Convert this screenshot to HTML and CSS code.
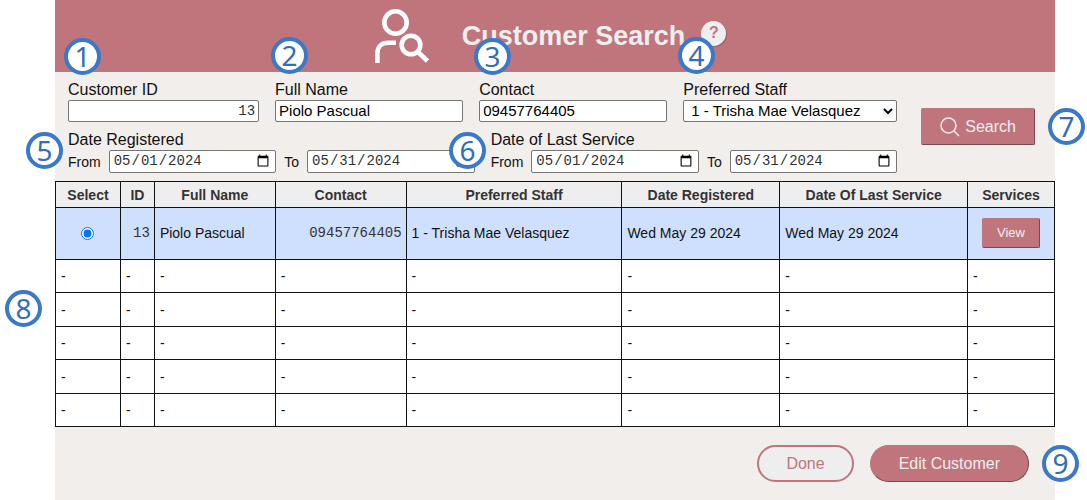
FILE: index.html
```html
<!DOCTYPE html>
<html lang="en">
<head>
<meta charset="utf-8">
<title>Customer Search</title>
<link rel="stylesheet" href="styles.css">
</head>
<body>
<main class="page">
  <header class="banner">
    <svg class="banner-icon" viewBox="0 0 54 54" fill="none" stroke="#fff" stroke-width="4.6" aria-hidden="true">
      <circle cx="20.5" cy="13.5" r="11.2"/>
      <path d="M2.4 54V44.500C2.400 37.500 6.500 33.800 13 33.800H21"/>
      <circle cx="36" cy="36" r="9.300"/>
      <path d="M42.500 42.500L52.500 52"/>
    </svg>
    <h1 class="title">Customer Search</h1>
    <button class="help" type="button" aria-label="Help">?</button>
  </header>

  <form class="search">
    <div class="fields">
      <div class="row">
        <div class="field first"><label for="cid">Customer ID</label><input id="cid" class="control mono number" type="text" value="13"></div>
        <div class="field"><label for="name">Full Name</label><input id="name" class="control" type="text" value="Piolo Pascual"></div>
        <div class="field"><label for="contact">Contact</label><input id="contact" class="control" type="text" value="09457764405"></div>
        <div class="field staff"><label for="staff">Preferred Staff</label><select id="staff" class="control"><option>1 - Trisha Mae Velasquez</option></select></div>
      </div>
      <div class="row">
        <fieldset class="range">
          <legend>Date Registered</legend>
          <div class="dates">
            <label for="rf">From</label><input id="rf" class="control mono date" type="date" value="2024-05-01">
            <label for="rt">To</label><input id="rt" class="control mono date" type="date" value="2024-05-31">
          </div>
        </fieldset>
        <fieldset class="range">
          <legend>Date of Last Service</legend>
          <div class="dates">
            <label for="sf">From</label><input id="sf" class="control mono date" type="date" value="2024-05-01">
            <label for="st">To</label><input id="st" class="control mono date" type="date" value="2024-05-31">
          </div>
        </fieldset>
      </div>
    </div>
    <button class="btn btn-search" type="button">
      <svg class="search-icon" viewBox="0 0 20 20" fill="none" stroke="currentColor" stroke-width="1.500" aria-hidden="true"><circle cx="8.500" cy="8.500" r="7.500"/><path d="M14 14l5 5"/></svg>
      Search
    </button>
  </form>

  <table class="results">
    <colgroup><col class="c-select"><col class="c-id"><col class="c-name"><col class="c-contact"><col class="c-staff"><col class="c-reg"><col class="c-last"><col class="c-services"></colgroup>
    <thead>
      <tr><th>Select</th><th>ID</th><th>Full Name</th><th>Contact</th><th>Preferred Staff</th><th>Date Registered</th><th>Date Of Last Service</th><th>Services</th></tr>
    </thead>
    <tbody>
      <tr class="selected"><td class="center"><input type="radio" name="pick" aria-label="Select Piolo Pascual" checked></td><td class="mono number">13</td><td>Piolo Pascual</td><td class="mono number">09457764405</td><td>1 - Trisha Mae Velasquez</td><td>Wed May 29 2024</td><td>Wed May 29 2024</td><td class="center"><button class="btn btn-view" type="button">View</button></td></tr>
      <tr><td>-</td><td>-</td><td>-</td><td>-</td><td>-</td><td>-</td><td>-</td><td>-</td></tr>
      <tr><td>-</td><td>-</td><td>-</td><td>-</td><td>-</td><td>-</td><td>-</td><td>-</td></tr>
      <tr><td>-</td><td>-</td><td>-</td><td>-</td><td>-</td><td>-</td><td>-</td><td>-</td></tr>
      <tr><td>-</td><td>-</td><td>-</td><td>-</td><td>-</td><td>-</td><td>-</td><td>-</td></tr>
      <tr><td>-</td><td>-</td><td>-</td><td>-</td><td>-</td><td>-</td><td>-</td><td>-</td></tr>
    </tbody>
  </table>

  <footer class="actions">
    <button class="btn pill outline" type="button">Done</button>
    <button class="btn pill" type="button">Edit Customer</button>
  </footer>
</main>
<span class="callout n1">1</span>
<span class="callout n2">2</span>
<span class="callout n3">3</span>
<span class="callout n4">4</span>
<span class="callout n5">5</span>
<span class="callout n6">6</span>
<span class="callout n7">7</span>
<span class="callout n8">8</span>
<span class="callout n9">9</span>
</body>
</html>
```
FILE: styles.css
```css
* { box-sizing: border-box; }
body {
  margin: 0;
  padding: 0 32px 0 55px;
  position: relative;
  background: #fff;
  color: #111;
  font: 16px/20px "Liberation Sans", Arial, sans-serif;
}
.page { min-height: 100vh; background: #f2eeeb; }

.banner {
  display: flex;
  align-items: center;
  justify-content: center;
  height: 72px;
  padding-right: 9px;
  background: #c0757d;
}
.banner-icon { width: 54px; height: 54px; margin-right: 33px; }
.title { margin: 0 16px 0 0; font-size: 27px; line-height: 32px; color: #eee; }
.help {
  width: 25px;
  height: 25px;
  margin-bottom: 6px;
  padding: 0;
  border: 0;
  border-radius: 50%;
  background: #eee;
  box-shadow: 1px 1px 1px #8a6468;
  color: #c0757d;
  font: bold 16px/24px "Liberation Sans", Arial, sans-serif;
}

.search {
  display: flex;
  align-items: center;
  gap: 24px;
  padding: 8px 20px 8px 13px;
}
.fields { flex: 1; display: grid; gap: 8px; }
.row { display: flex; gap: 16px; }
.field { flex: 188 1 0; min-width: 0; display: grid; }
.first { flex-grow: 191; }
.staff { flex-grow: 214; }
.control {
  width: 100%;
  min-width: 0;
  height: 22px;
  margin: 0;
  padding: 0 3px 1px;
  border: 1px solid #767676;
  border-radius: 2px;
  background: #fff;
  color: #000;
  font: 15px "Liberation Sans", Arial, sans-serif;
}
.mono { font-family: "Liberation Mono", "Courier New", monospace; font-size: 14px; color: #333; }
.number { text-align: right; }
.range { flex: 1; min-width: 0; margin: 0; padding: 0; border: 0; }
.range legend { padding: 0; }
.dates { display: flex; align-items: center; gap: 8px; font-size: 14px; }
.date { flex: 1; height: 23px; }

.btn {
  border: 1px solid #c0757d;
  border-right-color: #7a474d;
  border-bottom-color: #7a474d;
  border-radius: 2px;
  background: #c0757d;
  color: #eee;
  font: 16px "Liberation Sans", Arial, sans-serif;
}
.btn-search { display: flex; align-items: center; gap: 5px; height: 37px; padding: 0 18px; }
.search-icon { width: 20px; height: 20px; }
.btn-view { height: 30px; padding: 0 14px; font-size: 13px; }

.results {
  width: 100%;
  table-layout: fixed;
  border-collapse: collapse;
  background: #fff;
  font-size: 14px;
  line-height: 16px;
}
.results th, .results td { border: 1px solid #111; padding: 0 4px; }
.results th { height: 26px; background: #eee; color: #333; }
.results td { height: 33px; padding-left: 5px; text-align: left; }
.results tr:nth-child(odd) td { height: 34px; }
.results .selected td { padding-bottom: 2px; background: #cfe0ff; }
.results tr:nth-child(1) td { height: 52px; }
.results .center { padding-left: 4px; text-align: center; }
.results td.number { text-align: right; }
.results input { margin: 0; vertical-align: middle; }
.c-select { width: 6.5%; }
.c-id { width: 3.4%; }
.c-name { width: 12.1%; }
.c-contact { width: 13.1%; }
.c-staff { width: 21.6%; }
.c-reg { width: 15.8%; }
.c-last { width: 18.8%; }
.c-services { width: 8.7%; }

.actions { display: flex; justify-content: flex-end; gap: 16px; padding: 18px 26px; }
.pill { height: 37px; padding: 0 28px; border-radius: 19px; }
.outline { padding: 0 27px; border: 2px solid #c0757d; background: #eee; color: #c0757d; }

.callout {
  position: absolute;
  width: 37px;
  height: 37px;
  border: 4px solid #3a79c7;
  border-radius: 50%;
  background: #fff;
  color: #336eb8;
  font: 28px/29px "Noto Sans", sans-serif;
  text-align: center;
}
.n1 { left: 64px; top: 38px; }
.n2 { left: 271px; top: 37px; }
.n3 { left: 474px; top: 38px; }
.n4 { left: 678px; top: 37px; }
.n5 { left: 26px; top: 132px; }
.n6 { left: 449px; top: 132px; }
.n7 { right: 2px; top: 108px; }
.n8 { left: 5px; top: 290px; }
.n9 { right: 8px; top: 445px; }
```
